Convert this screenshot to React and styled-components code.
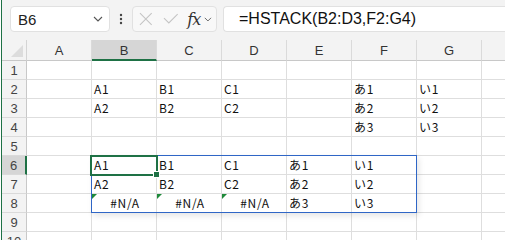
import React from 'react';
import styled, { createGlobalStyle } from 'styled-components';

const Global = createGlobalStyle`
  html, body { margin: 0; padding: 0; background: #ffffff; overflow: hidden; }
  body { font-family: "Noto Sans CJK JP", "Liberation Sans", sans-serif; }
`;

const COL_W = 65;
const HEAD_W = 25;
const ROW_H = 19;
const HEAD_H = 21;
const COLS = ['A', 'B', 'C', 'D', 'E', 'F', 'G', 'H'];
const ROWS = 10;

const green = '#1e7145';

const Frame = styled.div`
    width: 580px;
    margin-left: 1px;
    border-left: 1px solid ${green};
    background: #f3f3f3;
`;

const Toolbar = styled.div`
    height: 40px;
    display: flex;
    align-items: flex-start;
    padding: 6px 0 0 8px;
    box-sizing: border-box;
`;

const NameBox = styled.div`
    width: 100px;
    height: 26px;
    box-sizing: border-box;
    background: #ffffff;
    border: 1px solid #e1e1e1;
    border-radius: 4px;
    display: flex;
    align-items: center;
    justify-content: space-between;
    padding: 0 6px 0 7px;
    font-family: "Liberation Sans", Arial, sans-serif;
    font-size: 15px;
    color: #222;
`;

const Dots = styled.div`
    width: 22px;
    display: flex;
    justify-content: center;
    padding-top: 7px;
`;

const FxBox = styled.div`
    width: 85px;
    height: 26px;
    box-sizing: border-box;
    background: #f8f8f8;
    border: 1px solid #e1e1e1;
    border-radius: 4px;
    display: flex;
    align-items: center;
    padding: 0 4px 0 5px;
    gap: 4px;
`;

const Fx = styled.span`
    font-family: "DejaVu Serif", "Liberation Serif", serif;
    font-style: italic;
    font-size: 16px;
    color: #333;
    margin-left: 4px;
    letter-spacing: -1px;
`;

const FormulaBox = styled.div`
    flex: 1;
    margin-left: 6px;
    height: 26px;
    box-sizing: border-box;
    background: #ffffff;
    border: 1px solid #e1e1e1;
    border-right: none;
    border-radius: 4px 0 0 4px;
    display: flex;
    align-items: center;
    padding-left: 15px;
    font-family: "Liberation Sans", Arial, sans-serif;
    font-size: 16px;
    color: #111;
`;

const Sheet = styled.div`
    position: relative;
    display: grid;
    grid-template-columns: ${HEAD_W}px repeat(${COLS.length}, ${COL_W}px);
    grid-template-rows: ${HEAD_H}px repeat(${ROWS}, ${ROW_H}px);
    background: #ffffff;
`;

const Corner = styled.div`
    position: relative;
    background: #f3f3f3;
    border-right: 1px solid #d4d4d4;
    border-bottom: 1px solid #c8c8c8;
    &::after {
        content: '';
        position: absolute;
        right: 3px;
        bottom: 3px;
        border-style: solid;
        border-width: 0 0 12px 12px;
        border-color: transparent transparent #dcdcdc transparent;
    }
`;

const ColHead = styled.div`
    background: ${p => (p.$active ? '#d6d6d6' : '#f3f3f3')};
    border-right: 1px solid #dadada;
    border-bottom: ${p => (p.$active ? `2px solid ${green}` : '1px solid #c8c8c8')};
    display: flex;
    align-items: center;
    justify-content: center;
    font-family: "Liberation Sans", Arial, sans-serif;
    font-size: 13px;
    color: #333;
    padding-top: 1px;
`;

const RowHead = styled.div`
    background: ${p => (p.$active ? '#d6d6d6' : '#f3f3f3')};
    border-right: ${p => (p.$active ? `2px solid ${green}` : '1px solid #c8c8c8')};
    border-bottom: 1px solid #dadada;
    display: flex;
    align-items: center;
    justify-content: center;
    font-family: "Liberation Sans", Arial, sans-serif;
    font-size: 13px;
    color: #444;
`;

const Cell = styled.div`
    position: relative;
    border-right: 1px solid #dedede;
    border-bottom: 1px solid #dedede;
    display: flex;
    align-items: flex-end;
    justify-content: ${p => (p.$error ? 'center' : 'flex-start')};
    padding: 0 0 1px 2px;
    font-size: 12px;
    letter-spacing: 0.7px;
    line-height: 16px;
    color: #111;
    white-space: nowrap;
    overflow: hidden;
    ${p => p.$error && `
        &::before {
            content: '';
            position: absolute;
            left: 0;
            top: 0;
            border-style: solid;
            border-width: 5px 5px 0 0;
            border-color: #1f8a3a transparent transparent transparent;
        }
    `}
`;

const Spill = styled.div`
    position: absolute;
    border: 1px solid #2f66c6;
    box-shadow: 2px 3px 6px rgba(0, 0, 0, 0.10);
    pointer-events: none;
`;

const Selection = styled.div`
    position: absolute;
    border: 2px solid ${green};
    box-sizing: border-box;
    pointer-events: none;
`;

const Handle = styled.div`
    position: absolute;
    right: -4px;
    bottom: -4px;
    width: 5px;
    height: 5px;
    background: ${green};
    border: 1px solid #ffffff;
`;

const ERR = '#N/A';
const data = {
    2: { B: 'A1', C: 'B1', D: 'C1', F: 'あ1', G: 'い1' },
    3: { B: 'A2', C: 'B2', D: 'C2', F: 'あ2', G: 'い2' },
    4: { F: 'あ3', G: 'い3' },
    6: { B: 'A1', C: 'B1', D: 'C1', E: 'あ1', F: 'い1' },
    7: { B: 'A2', C: 'B2', D: 'C2', E: 'あ2', F: 'い2' },
    8: { B: ERR, C: ERR, D: ERR, E: 'あ3', F: 'い3' },
};

// grid position of a cell's top-left gridline
const colX = c => HEAD_W + COL_W * c - 1;
const rowY = r => HEAD_H + ROW_H * (r - 1) - 1;

const Chevron = ({ size = 10 }) => (
    <svg width={size} height={size * 0.6} viewBox="0 0 10 6">
        <path d="M1 1 L5 5 L9 1" fill="none" stroke="#555" strokeWidth="1.1" />
    </svg>
);

export default function App() {
    const cells = [];
    for (let r = 1; r <= ROWS; r++) {
        cells.push(<RowHead key={'h' + r} $active={r === 6}>{r}</RowHead>);
        COLS.forEach(c => {
            const v = data[r] && data[r][c];
            cells.push(
                <Cell key={c + r} $error={v === ERR}>{v || ''}</Cell>
            );
        });
    }

    return (
        <Frame>
            <Global />
            <Toolbar>
                <NameBox>
                    <span>B6</span>
                    <Chevron size={10} />
                </NameBox>
                <Dots>
                    <svg width="4" height="12" viewBox="0 0 4 12">
                        <circle cx="2" cy="2" r="1.2" fill="#444" />
                        <circle cx="2" cy="6" r="1.2" fill="#444" />
                        <circle cx="2" cy="10" r="1.2" fill="#444" />
                    </svg>
                </Dots>
                <FxBox>
                    <svg width="16" height="16" viewBox="0 0 16 16">
                        <path d="M2 2 L14 14 M14 2 L2 14" stroke="#c4c4c4" strokeWidth="1.1" fill="none" />
                    </svg>
                    <svg width="18" height="16" viewBox="0 0 18 16" style={{ marginLeft: 4 }}>
                        <path d="M2 7 L7 12 L16 3" stroke="#c4c4c4" strokeWidth="1.1" fill="none" />
                    </svg>
                    <Fx>fx</Fx>
                    <Chevron size={8} />
                </FxBox>
                <FormulaBox>=HSTACK(B2:D3,F2:G4)</FormulaBox>
            </Toolbar>
            <Sheet>
                <Corner />
                {COLS.map(c => (
                    <ColHead key={c} $active={c === 'B'}>{c === 'H' ? '' : c}</ColHead>
                ))}
                {cells}
                <Spill
                    style={{
                        left: colX(1),
                        top: rowY(6),
                        width: COL_W * 5 - 1,
                        height: ROW_H * 3 - 1,
                    }}
                />
                <Selection
                    style={{
                        left: colX(1) - 1,
                        top: rowY(6),
                        width: COL_W + 3,
                        height: ROW_H + 2,
                    }}
                >
                    <Handle />
                </Selection>
            </Sheet>
        </Frame>
    );
}
